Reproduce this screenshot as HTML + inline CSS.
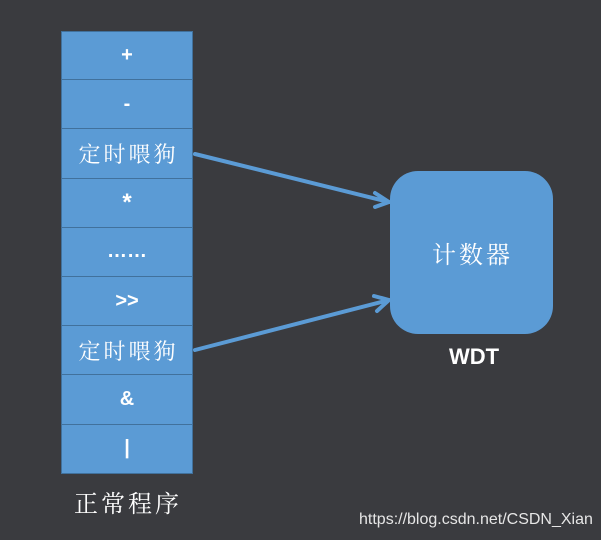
<!DOCTYPE html>
<html><head><meta charset="utf-8"><style>
html,body{margin:0;padding:0;}
body{width:601px;height:540px;background:#3a3b3f;position:relative;overflow:hidden;font-family:"Liberation Sans","Noto Serif CJK SC",serif;}
.col{position:absolute;left:61px;top:31px;width:132px;}
.cell{box-sizing:border-box;height:49.2px;background:#5b9bd5;border:1px solid #41719c;border-top:none;color:#fff;font-size:20px;font-weight:bold;display:flex;align-items:center;justify-content:center;}
.cell:first-child{border-top:1px solid #41719c;}
.cj{font-size:22px;font-weight:normal;letter-spacing:3px;padding-left:3px;}
.box{position:absolute;left:390px;top:171px;width:163px;height:163px;background:#5b9bd5;border-radius:28px;color:#fff;font-size:24px;display:flex;align-items:center;justify-content:center;letter-spacing:3px;padding-left:2px;box-sizing:border-box;}
.t{position:absolute;color:#fff;}
</style></head><body>
<div class="col">
<div class="cell">+</div>
<div class="cell">-</div>
<div class="cell cj">定时喂狗</div>
<div class="cell" style="font-size:24px">*</div>
<div class="cell">……</div>
<div class="cell">&gt;&gt;</div>
<div class="cell cj">定时喂狗</div>
<div class="cell">&amp;</div>
<div class="cell">|</div>
</div>
<div class="box">计数器</div>
<div class="t" style="left:449px;top:344px;font-size:22px;font-weight:bold;font-family:'Liberation Sans Narrow','Liberation Sans',sans-serif;">WDT</div>
<div class="t" style="left:74px;top:484px;font-size:24px;letter-spacing:3px;">正常程序</div>
<div class="t" style="left:359px;top:511px;font-size:16px;font-family:'Liberation Sans',sans-serif;color:#e6e6e6;">https://blog.csdn.net/CSDN_Xian</div>
<svg width="601" height="540" style="position:absolute;left:0;top:0" fill="none" stroke="#5b9bd5" stroke-width="4" stroke-linecap="round" stroke-linejoin="round">
<path d="M195 154 L389 202 M375 193 L389 202 L375 207"/>
<path d="M195 350 L389 300 M374 296 L389 300 L377 311"/>
</svg>
</body></html>
